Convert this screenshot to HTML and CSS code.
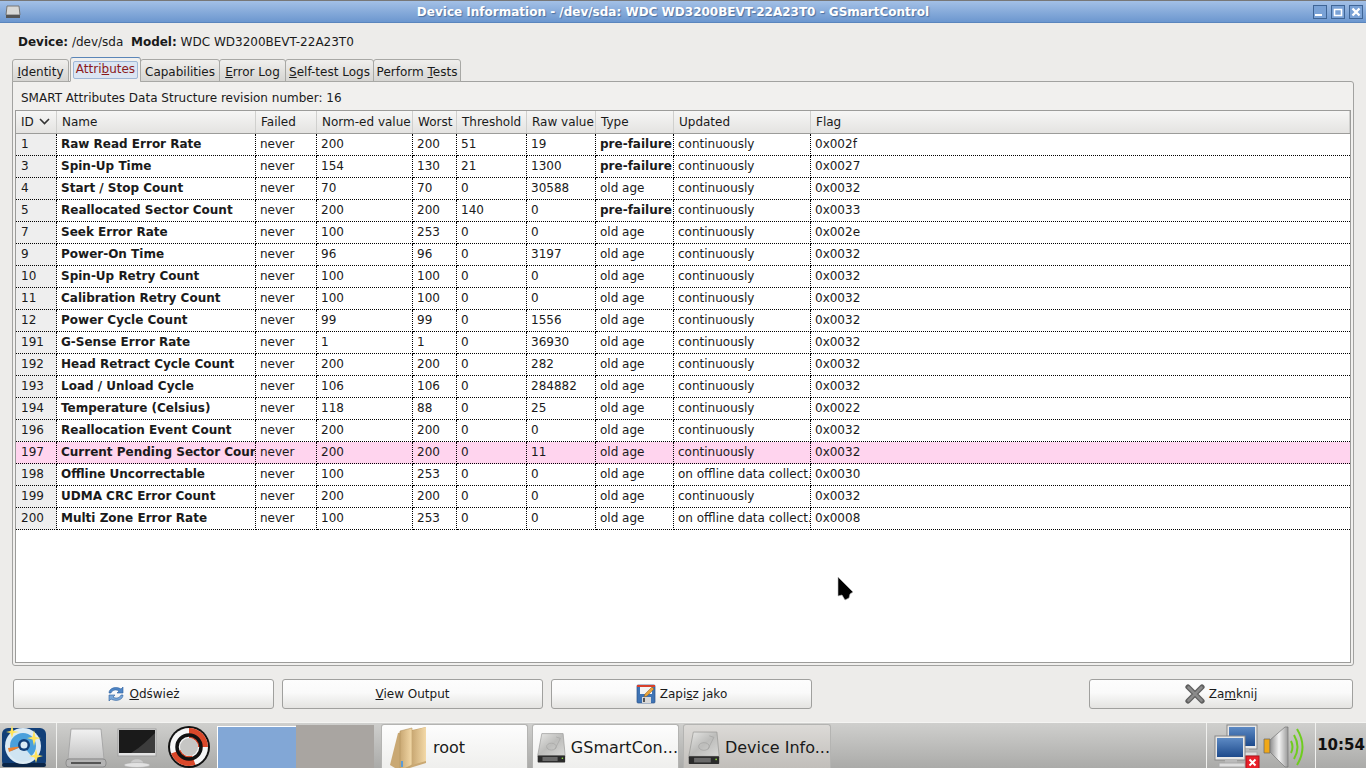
FILE: index.html
```html
<!DOCTYPE html>
<html lang="en">
<head>
    <meta charset="UTF-8">
    <title>Device Information - GSmartControl</title>
    <link rel="stylesheet" href="styles.css">
</head>
<body>
    <!-- Shared icons -->
    <svg class="defs" width="0" height="0">
        <defs>
            <linearGradient id="metal" x1="0" y1="0" x2="1" y2="1">
                <stop offset="0" stop-color="#e8e8e6"/>
                <stop offset="0.5" stop-color="#bdbdbb"/>
                <stop offset="1" stop-color="#d8d8d6"/>
            </linearGradient>
            <linearGradient id="folder" x1="0" y1="0" x2="1" y2="0">
                <stop offset="0" stop-color="#c9a873"/>
                <stop offset="1" stop-color="#f3d9a8"/>
            </linearGradient>
            <linearGradient id="screen" x1="0" y1="0" x2="0" y2="1">
                <stop offset="0" stop-color="#5d8ac4"/>
                <stop offset="1" stop-color="#1d4a8c"/>
            </linearGradient>
            <linearGradient id="grey" x1="0" y1="0" x2="0" y2="1">
                <stop offset="0" stop-color="#f2f2f2"/>
                <stop offset="1" stop-color="#c4c4c4"/>
            </linearGradient>
            <linearGradient id="speaker" x1="0" y1="0" x2="1" y2="0">
                <stop offset="0" stop-color="#8e8e8e"/>
                <stop offset="0.5" stop-color="#f4f4f4"/>
                <stop offset="1" stop-color="#9a9a9a"/>
            </linearGradient>
            <symbol id="hdd" viewBox="0 0 42 44">
                <path d="M7 1H38L41 33H1Z" fill="url(#metal)" stroke="#9a9a98"/>
                <ellipse cx="21" cy="20" rx="7" ry="5" fill="none" stroke="#a4a4a2"/>
                <path d="M28 6L34 8L26 24" fill="none" stroke="#a4a4a2"/>
                <rect x="1" y="33" width="40" height="10" rx="1" fill="#2b2b2b"/>
                <rect x="8" y="35" width="22" height="6" fill="#6a6a6a"/>
                <rect x="36" y="36" width="2" height="2" fill="#8fe040"/>
            </symbol>
            <symbol id="monitor" viewBox="0 0 44 44">
                <rect x="12" y="1" width="30" height="24" fill="#e8e8e8" stroke="#888"/>
                <rect x="14" y="3" width="26" height="19" fill="url(#screen)"/>
                <rect x="22" y="25" width="12" height="4" fill="#bbb"/>
                <rect x="16" y="28" width="26" height="4" fill="#ddd" stroke="#aaa"/>
            </symbol>
        </defs>
    </svg>

    <div class="window">
        <!-- Title bar -->
        <div class="titlebar">
            <svg class="title-icon" width="16" height="14" viewBox="0 0 16 14">
                <path d="M2 1H14L15 10H1Z" fill="#d8d8d6" stroke="#777"/>
                <rect x="1" y="10" width="14" height="3" fill="#555"/>
            </svg>
            <span class="title-text">Device Information - /dev/sda: WDC WD3200BEVT-22A23T0 - GSmartControl</span>
            <div class="title-buttons">
                <span class="wm-btn"><svg width="12" height="12" viewBox="0 0 12 12"><rect x="1" y="8" width="7" height="2" fill="#fff"/></svg></span>
                <span class="wm-btn"><svg width="12" height="12" viewBox="0 0 12 12"><path d="M2.5 3.5h7v6h-7z" fill="none" stroke="#fff" stroke-width="1.6"/></svg></span>
                <span class="wm-btn"><svg width="12" height="12" viewBox="0 0 12 12"><path d="M2.5 2.5l7 7M9.5 2.5l-7 7" stroke="#fff" stroke-width="2.4"/></svg></span>
            </div>
        </div>

        <!-- Device line -->
        <div class="device-line">
            <b>Device:</b> /dev/sda &nbsp;<b>Model:</b> WDC WD3200BEVT-22A23T0
        </div>

        <!-- Tabs -->
        <div class="tabs">
            <div class="tab tab-identity"><u>I</u>dentity</div>
            <div class="tab tab-active"><span class="tab-focus">Attri<u>b</u>utes</span></div>
            <div class="tab tab-capabilities">Capabilities</div>
            <div class="tab tab-errors"><u>E</u>rror Log</div>
            <div class="tab tab-selftest"><u>S</u>elf-test Logs</div>
            <div class="tab tab-perform">Perform <u>T</u>ests</div>
        </div>

        <div class="panel">
            <div class="revision">SMART Attributes Data Structure revision number: 16</div>
            <div class="tree">
                <table>
                    <colgroup>
                        <col class="c-id"><col class="c-name"><col class="c-failed"><col class="c-norm"><col class="c-worst">
                        <col class="c-thresh"><col class="c-raw"><col class="c-type"><col class="c-updated"><col>
                    </colgroup>
                    <thead>
                        <tr>
                            <th>ID <svg class="sort" width="11" height="7" viewBox="0 0 11 7"><path d="M1 1l4.500 4.500L10 1" fill="none" stroke="#333" stroke-width="1.600"/></svg></th>
                            <th>Name</th><th>Failed</th><th>Norm-ed value</th><th>Worst</th><th>Threshold</th><th>Raw value</th><th>Type</th><th>Updated</th><th>Flag</th>
                        </tr>
                    </thead>
                    <tbody>
                        <tr><td>1</td><td>Raw Read Error Rate</td><td>never</td><td>200</td><td>200</td><td>51</td><td>19</td><td class="pre">pre-failure</td><td>continuously</td><td>0x002f</td></tr>
                        <tr><td>3</td><td>Spin-Up Time</td><td>never</td><td>154</td><td>130</td><td>21</td><td>1300</td><td class="pre">pre-failure</td><td>continuously</td><td>0x0027</td></tr>
                        <tr><td>4</td><td>Start / Stop Count</td><td>never</td><td>70</td><td>70</td><td>0</td><td>30588</td><td>old age</td><td>continuously</td><td>0x0032</td></tr>
                        <tr><td>5</td><td>Reallocated Sector Count</td><td>never</td><td>200</td><td>200</td><td>140</td><td>0</td><td class="pre">pre-failure</td><td>continuously</td><td>0x0033</td></tr>
                        <tr><td>7</td><td>Seek Error Rate</td><td>never</td><td>100</td><td>253</td><td>0</td><td>0</td><td>old age</td><td>continuously</td><td>0x002e</td></tr>
                        <tr><td>9</td><td>Power-On Time</td><td>never</td><td>96</td><td>96</td><td>0</td><td>3197</td><td>old age</td><td>continuously</td><td>0x0032</td></tr>
                        <tr><td>10</td><td>Spin-Up Retry Count</td><td>never</td><td>100</td><td>100</td><td>0</td><td>0</td><td>old age</td><td>continuously</td><td>0x0032</td></tr>
                        <tr><td>11</td><td>Calibration Retry Count</td><td>never</td><td>100</td><td>100</td><td>0</td><td>0</td><td>old age</td><td>continuously</td><td>0x0032</td></tr>
                        <tr><td>12</td><td>Power Cycle Count</td><td>never</td><td>99</td><td>99</td><td>0</td><td>1556</td><td>old age</td><td>continuously</td><td>0x0032</td></tr>
                        <tr><td>191</td><td>G-Sense Error Rate</td><td>never</td><td>1</td><td>1</td><td>0</td><td>36930</td><td>old age</td><td>continuously</td><td>0x0032</td></tr>
                        <tr><td>192</td><td>Head Retract Cycle Count</td><td>never</td><td>200</td><td>200</td><td>0</td><td>282</td><td>old age</td><td>continuously</td><td>0x0032</td></tr>
                        <tr><td>193</td><td>Load / Unload Cycle</td><td>never</td><td>106</td><td>106</td><td>0</td><td>284882</td><td>old age</td><td>continuously</td><td>0x0032</td></tr>
                        <tr><td>194</td><td>Temperature (Celsius)</td><td>never</td><td>118</td><td>88</td><td>0</td><td>25</td><td>old age</td><td>continuously</td><td>0x0022</td></tr>
                        <tr><td>196</td><td>Reallocation Event Count</td><td>never</td><td>200</td><td>200</td><td>0</td><td>0</td><td>old age</td><td>continuously</td><td>0x0032</td></tr>
                        <tr class="warn"><td>197</td><td>Current Pending Sector Count</td><td>never</td><td>200</td><td>200</td><td>0</td><td>11</td><td>old age</td><td>continuously</td><td>0x0032</td></tr>
                        <tr><td>198</td><td>Offline Uncorrectable</td><td>never</td><td>100</td><td>253</td><td>0</td><td>0</td><td>old age</td><td>on offline data collect.</td><td>0x0030</td></tr>
                        <tr><td>199</td><td>UDMA CRC Error Count</td><td>never</td><td>200</td><td>200</td><td>0</td><td>0</td><td>old age</td><td>continuously</td><td>0x0032</td></tr>
                        <tr><td>200</td><td>Multi Zone Error Rate</td><td>never</td><td>100</td><td>253</td><td>0</td><td>0</td><td>old age</td><td>on offline data collect.</td><td>0x0008</td></tr>
                    </tbody>
                </table>
            </div>
        </div>

        <!-- Dialog buttons -->
        <div class="actions">
            <div class="btn">
                <svg width="18" height="18" viewBox="0 0 18 18">
                    <path d="M2 8C2 3 9 1 14 4L16 2V8H10L12 6C9 4 5 5 4 8Z" fill="#4f86c6" stroke="#2d5f9e" stroke-width=".6"/>
                    <path d="M16 10C16 15 9 17 4 14L2 16V10H8L6 12C9 14 13 13 14 10Z" fill="#7aa7d8" stroke="#2d5f9e" stroke-width=".6"/>
                </svg>
                <span><u>O</u>dśwież</span>
            </div>
            <div class="btn"><span><u>V</u>iew Output</span></div>
            <div class="btn">
                <svg width="20" height="20" viewBox="0 0 20 20">
                    <rect x="1" y="1" width="18" height="18" rx="1" fill="#3f74b5" stroke="#2a5288" stroke-width=".7"/>
                    <rect x="4" y="2" width="12" height="8" fill="#f4f4f4"/>
                    <rect x="1" y="1" width="18" height="2" fill="#d8402c"/>
                    <rect x="6" y="13" width="9" height="6" fill="#d8d8d8"/>
                    <rect x="7" y="14" width="2" height="4" fill="#555"/>
                    <path d="M9 10L16 3L18 5L11 12L8 13Z" fill="#e8a33a" stroke="#8a5a1a" stroke-width=".5"/>
                </svg>
                <span>Zapi<u>s</u>z jako</span>
            </div>
            <div class="btn btn-close">
                <svg width="20" height="20" viewBox="0 0 20 20">
                    <path d="M3 3l14 14M17 3L3 17" stroke="#5e5e5e" stroke-width="5.200" stroke-linecap="round"/>
                    <path d="M3.500 3.500l13 13M16.500 3.500l-13 13" stroke="#8a8a8a" stroke-width="2.600" stroke-linecap="round"/>
                </svg>
                <span>Za<u>m</u>knij</span>
            </div>
        </div>

        <!-- Panel at the bottom of the desktop -->
        <div class="taskbar">
            <div class="start">
                <svg width="48" height="44" viewBox="0 0 48 44">
                    <rect x="2" y="3" width="44" height="39" rx="6" fill="#123f78"/>
                    <rect x="2" y="38" width="44" height="4" rx="2" fill="#0a2547"/>
                    <circle cx="23" cy="21" r="18" fill="#dcebf5"/>
                    <circle cx="23" cy="21" r="13" fill="#4aa0dc"/>
                    <path d="M23 21L9 27A15 15 0 0 0 33 33Z" fill="#cfe4f2"/>
                    <path d="M23 21L9 27L8 23Z" fill="#ee8130"/>
                    <circle cx="24" cy="20" r="6" fill="#123f78"/>
                    <circle cx="24" cy="20" r="3.500" fill="#dcebf5"/>
                    <path d="M12 0L13.500 6L19 7L13.500 8L12 13L10.500 8L6 7L10.500 6Z" fill="#ffe45c"/>
                    <path d="M34 5L35.500 12L41 13L35.500 14.500L34 21L32.500 14.500L27 13L32.500 12Z" fill="#ffe45c"/>
                    <path d="M36 24L37.500 30L43 31L37.500 32.500L36 38L34.500 32.500L29 31L34.500 30Z" fill="#ffe45c"/>
                </svg>
            </div>
            <div class="launchers">
                <svg width="42" height="44" viewBox="0 0 42 44">
                    <path d="M6 4H36L39 34H3Z" fill="url(#grey)" stroke="#a8a8a8"/>
                    <rect x="1" y="34" width="40" height="8" rx="3" fill="#b4b4b4" stroke="#8c8c8c"/>
                    <rect x="6" y="37" width="30" height="2" fill="#555"/>
                </svg>
                <svg width="40" height="44" viewBox="0 0 40 44">
                    <rect x="1" y="4" width="38" height="27" fill="#e4e4e4" stroke="#a0a0a0"/>
                    <rect x="2" y="5" width="36" height="23" fill="#1a1a1a"/>
                    <path d="M14 28C24 22 32 14 38 8V28Z" fill="#3c3c3c"/>
                    <path d="M14 38C14 33 26 33 26 38Z" fill="#ccc"/>
                    <ellipse cx="20" cy="40" rx="13" ry="2.500" fill="#e2e2e2" stroke="#aaa" stroke-width=".6"/>
                </svg>
                <svg width="44" height="44" viewBox="0 0 44 44">
                    <circle cx="22" cy="22" r="21" fill="#111"/>
                    <circle cx="22" cy="22" r="19" fill="#f6f6f6"/>
                    <path d="M22 3A19 19 0 0 1 41 22H31A9 9 0 0 0 22 13Z" fill="#d9482a"/>
                    <path d="M22 41A19 19 0 0 1 3 22H13A9 9 0 0 0 22 31Z" fill="#d9482a" transform="rotate(-20 22 22)"/>
                    <circle cx="22" cy="22" r="12" fill="none" stroke="#111" stroke-width="3.500"/>
                    <circle cx="22" cy="22" r="9" fill="#c6c6c4"/>
                </svg>
            </div>
            <div class="pager">
                <div class="desk desk-on"></div>
                <div class="desk"></div>
            </div>
            <div class="task">
                <svg width="42" height="46" viewBox="0 0 42 46">
                    <path d="M4 40L12 8L40 2L40 38L14 46Z" fill="#c9a873"/>
                    <path d="M14 46V6L26 3V40Z" fill="url(#folder)" stroke="#b4935f" stroke-width=".6"/>
                    <path d="M26 40V6L40 2V36Z" fill="url(#folder)"/>
                    <rect x="15" y="36" width="2" height="6" fill="#5b9bd5"/>
                </svg>
                <span class="task-root">root</span>
            </div>
            <div class="task">
                <svg width="42" height="44"><use href="#hdd"/></svg>
                <span class="task-gsmart">GSmartCon...</span>
            </div>
            <div class="task task-active">
                <svg width="42" height="44"><use href="#hdd"/></svg>
                <span>Device Info...</span>
            </div>
            <div class="tray">
                <svg width="46" height="46" viewBox="0 0 46 46">
                    <use href="#monitor" width="44" height="44" x="1" y="0"/>
                    <use href="#monitor" width="44" height="44" x="-11" y="11"/>
                    <rect x="32" y="32" width="13" height="13" fill="#e8202a" stroke="#b01018"/>
                    <path d="M35.500 35.500l6 6M41.500 35.500l-6 6" stroke="#fff" stroke-width="2"/>
                </svg>
                <svg class="speaker" width="46" height="44" viewBox="0 0 46 44">
                    <path d="M4 14H10V28H4Z" fill="#f0a818" stroke="#666" stroke-width=".7"/>
                    <path d="M10 15L25 2H28V42H25L10 27Z" fill="url(#speaker)" stroke="#777" stroke-width=".7"/>
                    <path d="M31 16Q34 22 31 28" fill="none" stroke="#6fcc1f" stroke-width="2"/>
                    <path d="M34 10Q41 22 34 34" fill="none" stroke="#6fcc1f" stroke-width="2"/>
                    <path d="M37 4Q48 22 37 40" fill="none" stroke="#6fcc1f" stroke-width="2"/>
                </svg>
            </div>
            <div class="clock">10:54</div>
        </div>
    </div>

    <!-- Mouse pointer -->
    <svg class="pointer" width="20" height="26" viewBox="0 0 20 26">
        <path d="M2 1L17 16L14 18L13 22L9 24L6 19L2 20Z" fill="#000" stroke="#bbb" stroke-width="1" stroke-opacity=".6"/>
    </svg>
</body>
</html>
```

FILE: styles.css
```css
/* Basic Styles */
html, body {
    margin: 0;
    height: 100%;
    overflow: hidden;
}

body {
    font-family: "DejaVu Sans", sans-serif;
    font-size: 12px;
    color: #1a1a1a;
    background-color: #edecea;
}

.defs {
    position: absolute;
}

.window {
    display: flex;
    flex-direction: column;
    height: 768px;
}

/* Title bar */
.titlebar {
    display: flex;
    align-items: center;
    flex: none;
    height: 21px;
    border-top: 1px solid #777;
    background: linear-gradient(#a3c0e6, #6c97cf);
    border-bottom: 1px solid #5a85bd;
    position: relative;
}

.title-icon {
    margin-left: 5px;
}

.title-text {
    flex: 1;
    padding-left: 12px;
    text-align: center;
    color: #fff;
    font-weight: bold;
    text-shadow: 1px 1px 1px #4c6f9f;
}

.title-buttons {
    display: flex;
    gap: 4px;
    margin-right: 3px;
}

.wm-btn {
    display: flex;
    align-items: center;
    justify-content: center;
    width: 12px;
    height: 12px;
    border: 1px solid #3f6596;
    background-color: #7aa2d6;
}

/* Device line */
.device-line {
    flex: none;
    height: 34px;
    box-sizing: border-box;
    padding: 12px 0 0 18px;
    line-height: 15px;
}

/* Tabs */
.tabs {
    display: flex;
    flex: none;
    align-items: flex-end;
    height: 25px;
    padding-left: 12px;
    margin-bottom: -1px;
    position: relative;
    z-index: 1;
}

.tab {
    box-sizing: border-box;
    height: 23px;
    line-height: 24px;
    text-align: center;
    border: 1px solid #a8a8a5;
    border-radius: 3px 3px 0 0;
    background: linear-gradient(#f0efed, #d6d5d2);
    margin-left: -1px;
}

.tab-identity { width: 57px; margin-left: 0; }
.tab-capabilities { width: 80px; }
.tab-errors { width: 67px; }
.tab-selftest { width: 89px; }
.tab-perform { width: 88px; }

.tab-active {
    width: 71px;
    height: 25px;
    margin: 0 0 0 1px;
    padding-top: 3px;
    border-color: #5b86b8 #a8a8a5 transparent;
    border-width: 1px;
    background: #f1f0ee;
}

.tab-focus {
    display: block;
    height: 16px;
    line-height: 14px;
    margin: 0 2px;
    color: #8b1a1a;
    border: 1px solid #9fb7d6;
    border-radius: 2px;
    background-color: #dbe5f2;
}

/* Notebook panel */
.panel {
    display: flex;
    flex-direction: column;
    flex: none;
    box-sizing: border-box;
    height: 585px;
    margin: 0 12px;
    padding: 0 2px 2px;
    border: 1px solid #a2a2a0;
    border-radius: 0 3px 3px 3px;
    background-color: #f1f0ee;
}

.revision {
    flex: none;
    height: 28px;
    line-height: 33px;
    padding-left: 6px;
}

.tree {
    flex: 1;
    border: 1px solid #9c9c9a;
    background-color: #fff;
}

table {
    width: 100%;
    table-layout: fixed;
    border-collapse: separate;
    border-spacing: 0;
}

.c-id { width: 41px; }
.c-name { width: 199px; }
.c-failed { width: 61px; }
.c-norm { width: 96px; }
.c-worst { width: 44px; }
.c-thresh { width: 70px; }
.c-raw { width: 69px; }
.c-type { width: 78px; }
.c-updated { width: 137px; }

th {
    height: 22px;
    padding: 0 0 0 5px;
    font-weight: normal;
    text-align: left;
    white-space: nowrap;
    border-bottom: 1px solid #9c9c9a;
    background: linear-gradient(#f6f6f5, #e4e3e1);
    box-shadow: inset -1px 0 0 #d0d0ce;
}

.sort {
    margin-left: 1px;
    vertical-align: 1px;
}

td {
    box-sizing: border-box;
    height: 22px;
    padding: 0 0 1px 4px;
    white-space: nowrap;
    overflow: hidden;
    border-right: 1px dotted #000;
    border-bottom: 1px dotted #000;
}

td:first-child {
    padding-left: 5px;
    background-color: #eeeeee;
}

td:nth-child(2),
td.pre {
    font-weight: bold;
}

td:last-child {
    border-right: none;
}

tr.warn td {
    background-color: #ffd4ee;
}

/* Dialog buttons */
.actions {
    display: flex;
    flex: none;
    gap: 8px;
    height: 56px;
    box-sizing: border-box;
    padding: 13px 13px 0;
}

.btn {
    display: flex;
    align-items: center;
    justify-content: center;
    gap: 4px;
    box-sizing: border-box;
    width: 261px;
    height: 30px;
    border: 1px solid #a0a09e;
    border-radius: 3px;
    background: linear-gradient(#fdfdfd, #fafafa 45%, #e4e3e1);
}

.btn-close {
    width: 264px;
    margin-left: auto;
}

/* Taskbar */
.taskbar {
    display: flex;
    flex: none;
    align-items: flex-end;
    height: 48px;
    box-sizing: border-box;
    border-top: 1px solid #f4f4f2;
    background: linear-gradient(#cfcfcd, #a9a9a7);
}

.start {
    display: flex;
    align-items: center;
    width: 57px;
    height: 47px;
    box-sizing: border-box;
    padding-left: 0;
    border-right: 1px solid #f0f0ee;
}

.launchers {
    display: flex;
    align-items: center;
    gap: 10px;
    width: 160px;
    height: 47px;
    box-sizing: border-box;
    padding-left: 8px;
}

.pager {
    display: flex;
    width: 157px;
    height: 45px;
    margin-right: 7px;
}

.desk {
    width: 79px;
    background-color: #a9a5a1;
}

.desk-on {
    width: 78px;
    background-color: #82a7d6;
    border-top: 1px solid #fff;
    border-bottom: 1px solid #fff;
    border-left: 1px solid #fff;
    box-shadow: 0 2px 0 #5a82b8;
    height: 41px;
    margin-top: 1px;
}

.task {
    display: flex;
    align-items: center;
    gap: 5px;
    width: 147px;
    height: 46px;
    box-sizing: border-box;
    padding-left: 4px;
    margin-right: 4px;
    border: 1px solid #b4b4b2;
    border-bottom: none;
    border-radius: 3px 3px 0 0;
    background: linear-gradient(#fdfdfd, #eeeeec);
    font-size: 16px;
    white-space: nowrap;
}

.task-root {
    padding-left: 0;
}

.task-active {
    width: 148px;
    background: linear-gradient(#dcdad7, #c0bdb9);
}

.tray {
    display: flex;
    align-items: center;
    gap: 0;
    width: 110px;
    height: 47px;
    box-sizing: border-box;
    margin-left: auto;
    padding-left: 7px;
    border-left: 1px solid #f0f0ee;
    border-right: 1px solid #f0f0ee;
}

.clock {
    width: 50px;
    height: 47px;
    line-height: 44px;
    text-align: center;
    font-size: 15px;
    font-weight: bold;
    color: #111;
}

/* Pointer floats over the table */
.pointer {
    position: absolute;
    left: 836px;
    top: 576px;
}
```
